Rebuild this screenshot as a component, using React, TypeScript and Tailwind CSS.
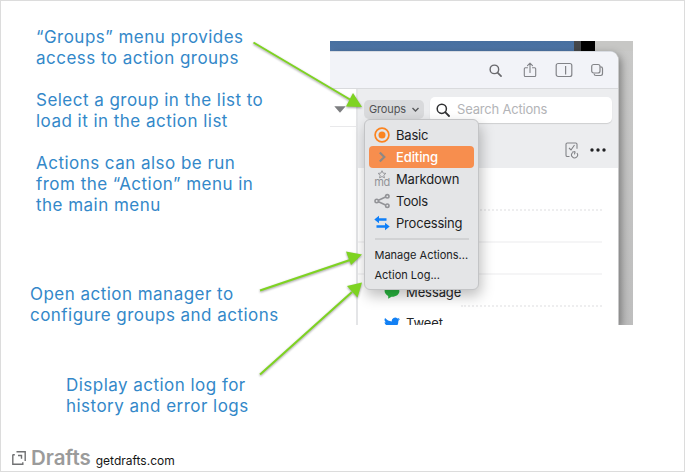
import type { ReactNode } from "react";

function Note({ lines, className }: { lines: string[]; className: string }) {
  return (
    <p className={`whitespace-nowrap text-[17px] leading-[21px] tracking-[0.470px] text-[#3388c9] ${className}`}>
      {lines.map((line) => (
        <span key={line} className="block">{line}</span>
      ))}
    </p>
  );
}

function SearchIcon({ className }: { className: string }) {
  return (
    <svg viewBox="0 0 14 14" className={className} fill="none" stroke="currentColor" strokeLinecap="round">
      <circle cx="5.8" cy="5.8" r="4.6" strokeWidth="1.5" />
      <path d="M9.2 9.2 13 13" strokeWidth="1.8" />
    </svg>
  );
}

function ShareIcon() {
  return (
    <svg viewBox="0 0 14 17" className="h-[17px] w-[14px]" fill="none" stroke="#828388" strokeWidth="1.1" strokeLinecap="round" strokeLinejoin="round">
      <path d="M4.5 5.8H2.3q-1 0-1 1v6.700q0 1 1 1h9.400q1 0 1-1V6.800q0-1-1-1H9.500M7 10.500V1.200M4.500 3.700 7 1.200 9.500 3.700" />
    </svg>
  );
}

function SidebarIcon() {
  return (
    <svg viewBox="0 0 18 16" className="h-4 w-[18px]" fill="none" stroke="#828388" strokeWidth="1.2">
      <rect x="1.200" y="1.500" width="15.600" height="13" rx="2" />
      <path d="M10.600 4v8.500" />
    </svg>
  );
}

function CopiesIcon() {
  return (
    <svg viewBox="0 0 14 14" className="h-3.5 w-3.5" fill="none" stroke="#838488" strokeWidth="1.200">
      <rect x="1.700" y="1.500" width="8.300" height="8.500" rx="2" />
      <path d="M10.300 3.800h.4q1.800 0 1.800 1.800v5q0 1.900-1.900 1.900H6q-1.800 0-1.900-1.800" />
    </svg>
  );
}

function BasicIcon() {
  return (
    <svg viewBox="0 0 16 16" className="size-4">
      <circle cx="8" cy="8" r="6.900" fill="none" stroke="#fb8420" strokeWidth="1.700" />
      <circle cx="8" cy="8" r="3.500" fill="#fb8420" />
    </svg>
  );
}

function EditingIcon() {
  return (
    <svg viewBox="0 0 16 16" className="size-4" fill="none" stroke="#8d8885" strokeWidth="2.200">
      <path d="M5.800 3.500 10.300 8 5.800 12.500" />
    </svg>
  );
}

function MarkdownIcon() {
  return (
    <span className="flex h-[19px] w-4 flex-col items-center text-[#929397]">
      <svg viewBox="0 0 10 9" className="h-[9px] w-[10px] shrink-0" fill="none" stroke="currentColor" strokeWidth="0.900" strokeLinejoin="round">
        <path d="m5 .7 1.100 2.400 2.800.3-2.100 1.800.7 2.700L5 6.500 2.500 7.900l.7-2.700-2.100-1.800 2.800-.3z" />
      </svg>
      <span className="mt-[-2px] text-[11px] leading-[11px] tracking-[-0.400px]">md</span>
    </span>
  );
}

function ToolsIcon() {
  return (
    <svg viewBox="0 0 16 16" className="size-4" fill="none" stroke="#929397" strokeWidth="1.600">
      <path d="m4.500 7.300 7-3.200M4.500 8.700l7 3.200" />
      <circle cx="2.700" cy="8" r="1.700" />
      <circle cx="13.300" cy="3.300" r="1.700" />
      <circle cx="13.300" cy="12.700" r="1.700" />
    </svg>
  );
}

function ProcessingIcon() {
  return (
    <svg viewBox="0 0 16 16" className="size-4" fill="#0f7ff8">
      <path d="M.3 4.500 5 .8v2.500h7.500v2.400H5v2.500zM15.700 11.500 11 7.800v2.500H2.500v2.400H11v2.500z" />
    </svg>
  );
}

function MenuItem({ icon, label, active = false }: { icon: ReactNode; label: string; active?: boolean }) {
  return (
    <li className={`flex h-[22px] items-center gap-[6px] rounded-[4px] pl-[5px] ${active ? "bg-[#f78e4e] text-white" : "text-[#1c1d1f]"}`}>
      <span className="flex w-4 shrink-0 justify-center">{icon}</span>
      <span className={`text-[13px] leading-[20px] ${active ? "font-medium tracking-[-0.100px]" : "tracking-[-0.200px]"}`}>{label}</span>
    </li>
  );
}

function GroupsMenu() {
  return (
    <div className="absolute top-[78px] left-[34px] h-[171px] w-[115px] rounded-[6px] border border-[#c3c4c6] bg-[#e4e5e7] px-1 pt-1 shadow-[2px_6px_14px_rgba(0,0,0,0.26)]">
      <ul>
        <MenuItem icon={<BasicIcon />} label="Basic" />
        <MenuItem icon={<EditingIcon />} label="Editing" active />
        <MenuItem icon={<MarkdownIcon />} label="Markdown" />
        <MenuItem icon={<ToolsIcon />} label="Tools" />
        <MenuItem icon={<ProcessingIcon />} label="Processing" />
      </ul>
      <div className="mr-[5px] ml-[6px] mt-[4px] h-[2px] bg-[#d1d2d4]" />
      <div className="mt-[5px] whitespace-nowrap pl-[5.500px] text-[11px] leading-[20px] text-[#202123]">
        <div>Manage Actions...</div>
        <div>Action Log...</div>
      </div>
    </div>
  );
}

function MessageIcon() {
  return (
    <svg viewBox="0 0 16 15" className="h-[15px] w-4" fill="#2ab840">
      <path d="M8 1c4.200 0 7.400 2.600 7.400 6s-3.200 5.800-7.400 5.800H7.500L4.200 14.800v-2.900C2.100 10.900.6 9.100.6 7 .6 3.600 3.800 1 8 1Z" />
    </svg>
  );
}

function BirdIcon() {
  return (
    <svg viewBox="0 0 24 24" className="h-[16px] w-[16px]" fill="#1280f4">
      <path d="M23.950 4.570a10 10 0 0 1-2.820.780 4.960 4.960 0 0 0 2.160-2.720 9.900 9.900 0 0 1-3.120 1.190 4.920 4.920 0 0 0-8.380 4.480C7.690 8.090 4.070 6.130 1.640 3.160a4.920 4.920 0 0 0 1.520 6.570 4.900 4.900 0 0 1-2.230-.610v.060a4.920 4.920 0 0 0 3.950 4.830 5 5 0 0 1-2.210.080 4.940 4.940 0 0 0 4.600 3.420A9.870 9.870 0 0 1 0 19.540a14 14 0 0 0 7.550 2.210c9.050 0 14-7.500 14-13.980q0-.320-.020-.630a10 10 0 0 0 2.460-2.550z" />
    </svg>
  );
}

function DraftsWindow() {
  return (
    <div className="relative h-[284px] w-[303px] overflow-hidden">
      <div className="flex h-full flex-col bg-linear-to-b from-[#c9c9c8] to-[#bebebe]">
        <div className="flex h-[10px] shrink-0">
          <div className="w-[244px] bg-linear-to-b from-[#476f9f] to-[#4f76a7]" />
          <div className="w-[7px] bg-[#45474a]" />
          <div className="w-[14px] bg-black" />
          <div className="flex-1 bg-[#c7c7c5]" />
        </div>
        <div className="flex min-h-0 flex-1">
          <div className="w-[289px] shrink-0 overflow-hidden rounded-tr-[9px] border-t border-r border-t-[#d8dbe2] border-r-[#c8c8c9] bg-white shadow-[2px_3px_9px_rgba(0,0,0,0.400)]">
            <div className="flex h-[36px] items-center bg-[#f2f3f8] pl-[159px]">
              <span className="w-[34px] text-[#69696d]"><SearchIcon className="size-[13px]" /></span>
              <span className="w-[32px]"><ShareIcon /></span>
              <span className="w-[35px]"><SidebarIcon /></span>
              <span><CopiesIcon /></span>
            </div>
            <div className="flex h-[237px] border-t border-[#d9dadd]">
              <div className="w-[28px] shrink-0 border-r-2 border-[#e4e5e7]">
                <div className="flex h-[38px] border-b border-[#e9e9eb] pl-[4px]">
                  <svg viewBox="0 0 12 7" className="mt-[17px] h-[7px] w-3"><path d="M.3.300h11.400L6 6.700z" fill="#7d7e80" /></svg>
                </div>
              </div>
              <div className="flex-1">
                <div className="h-[79px] bg-[#ecedef]">
                  <div className="flex pt-[8px] pl-[6px]">
                    <div className="mt-[3px] flex h-[19px] w-[60px] items-center rounded-[5px] bg-[#d9dadc] pl-[5px] text-[11px] tracking-[-0.150px] text-[#515255]">
                      Groups
                      <svg viewBox="0 0 9 9" className="ml-[5px] size-[9px]" fill="none" stroke="#58595b" strokeWidth="1.400"><path d="m1.500 3 3 3 3-3" /></svg>
                    </div>
                    <div className="ml-[6px] flex h-[26px] w-[182px] items-center rounded-[5px] bg-white pl-[6px] text-[13px] tracking-[-0.200px] text-[#b3b4b7] shadow-[0_1px_1px_rgba(0,0,0,0.130)]">
                      <SearchIcon className="mr-[7px] size-[14px] text-[#303133]" />
                      Search Actions
                    </div>
                  </div>
                  <div className="flex items-center pt-[18px] pl-[206px]">
                    <svg viewBox="0 0 16 18" className="h-[18px] w-4" fill="none" stroke="#828387" strokeWidth="1.100">
                      <path d="M5.500 15.500H3.300q-1.300 0-1.300-1.300V3.300Q2 2 3.300 2h8.400Q13 2 13 3.300v4.500M5 7l2 2 3.500-5M8.400 11.800a3 3 0 1 0 4.500.2M8 11.300l3.200-.8M11.200 10.500l-.8 2.800" />
                    </svg>
                    <svg viewBox="0 0 16 4" className="ml-[10px] h-1 w-4" fill="#202123"><circle cx="2" cy="2" r="1.700" /><circle cx="8" cy="2" r="1.700" /><circle cx="14" cy="2" r="1.700" /></svg>
                  </div>
                </div>
                <div className="pr-[16px] text-[13px] tracking-[-0.100px] text-[#252628]">
                  <div className="ml-[103px] h-[43px] border-b-2 border-dotted border-[#eeeeef]" />
                  <div className="h-[32px] border-b-2 border-[#f5f5f6]" />
                  <div className="h-[32px] border-b-2 border-[#f5f5f6]" />
                  <div className="relative flex h-[32px]">
                    <span className="ml-[26px] flex w-[22px] items-center"><MessageIcon /></span>
                    <span className="flex-1 leading-[34px]">Message</span>
                    <span className="w-[141px] border-b-2 border-dotted border-[#eeeeef]" />
                  </div>
                  <div className="flex h-[33px] items-center">
                    <span className="ml-[26px] flex w-[22px]"><BirdIcon /></span>
                    <span>Tweet</span>
                  </div>
                </div>
              </div>
            </div>
          </div>
        </div>
      </div>
      <GroupsMenu />
    </div>
  );
}

function Arrows() {
  return (
    <svg viewBox="0 0 685 472" className="pointer-events-none absolute -top-px -left-px h-[472px] w-[685px] drop-shadow-[0_1px_1px_rgba(0,0,0,0.400)]" fill="#7ed321" stroke="#7ed321" strokeWidth="2">
      <path d="M253.500 42.500 350 99.500M260 290.500 350 260M260 374.500 352 292" />
      <path stroke="none" d="m362 107-16-.5 7-13.500zM362 254.500l-11 10.500-5-13.500zM362 282.500l-4.500 15L347 286z" />
    </svg>
  );
}

export default function App() {
  return (
    <main className="relative flex h-[472px] w-[685px] overflow-hidden border border-[#dcdcdc] bg-white font-['Inter','Liberation_Sans',sans-serif]">
      <div className="flex w-[329px] shrink-0 flex-col">
        <Note className="mt-[26px] ml-[35px]" lines={["“Groups” menu provides", "access to action groups"]} />
        <Note className="mt-[21px] ml-[35px]" lines={["Select a group in the list to", "load it in the action list"]} />
        <Note className="mt-[21px] ml-[35px]" lines={["Actions can also be run", "from the “Action” menu in", "the main menu"]} />
        <Note className="mt-[68px] ml-[29px]" lines={["Open action manager to", "configure groups and actions"]} />
        <Note className="mt-[49px] ml-[65px]" lines={["Display action log for", "history and error logs"]} />
        <div className="mt-[26px] ml-[11px] flex h-[30px] items-baseline">
          <svg viewBox="0 0 14 14" className="size-[14px] self-center" fill="none" stroke="#707173" strokeWidth="1.400">
            <path d="M4.500.8h8.700v9.200M.8 3.500v9.700h10v-2M.8 3.800h2M6 4.500h3.500v3.200" />
          </svg>
          <span className="ml-[5px] text-[20.500px] font-semibold leading-[30px] tracking-[-0.050px] text-[#9b9b9b]">Drafts</span>
          <span className="ml-[5px] text-[12px] text-[#151515]">getdrafts.com</span>
        </div>
      </div>
      <div className="mt-[40px]"><DraftsWindow /></div>
      <Arrows />
    </main>
  );
}
